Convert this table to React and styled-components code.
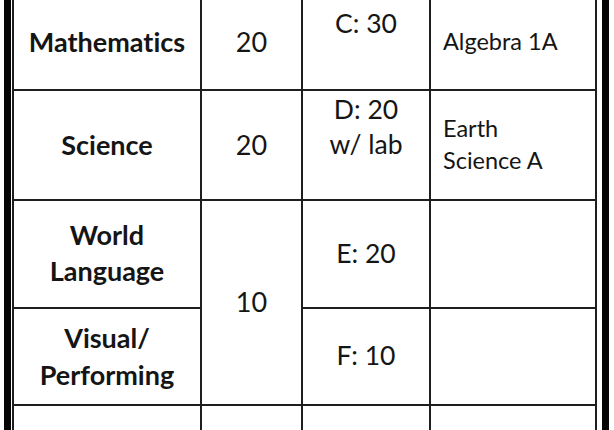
import React from "react";
import styled, { createGlobalStyle } from "styled-components";

const GlobalStyle = createGlobalStyle`
  html, body {
    margin: 0;
    padding: 0;
    background: #fff;
  }
  body {
    font-family: Lato, "Open Sans", "Liberation Sans", sans-serif;
    font-variant-ligatures: none;
    color: #151515;
  }
`;

const Page = styled.div`
  width: 614px;
  height: 430px;
  overflow: hidden;
  background: #fff;
`;

const Frame = styled.div`
  display: inline-block;
  margin: -7px 0 0 4px;
  padding: 0 5px 0 1px;
  border-left: 7px solid #050505;
  border-right: 7px solid #050505;
`;

const Grid = styled.div`
  display: grid;
  grid-template-columns: 186px 99px 126px 164px;
  grid-template-rows: 94px 108px 106px 95px 80px;
  gap: 2px;
  padding: 2px;
  background: #1e1e1e;
`;

const Cell = styled.div`
  background: #fff;
  display: flex;
  flex-direction: column;
  justify-content: center;
  align-items: ${(p) => (p.$left ? "flex-start" : "center")};
  padding: ${(p) => (p.$left ? "0 8px 2px 12px" : "0 4px 2px")};
  grid-row: ${(p) => (p.$span ? `span ${p.$span}` : "auto")};
  font-size: ${(p) => p.$size || 27}px;
  font-weight: ${(p) => (p.$bold ? 700 : 400)};
  line-height: ${(p) => p.$lh || 35}px;
  text-align: ${(p) => (p.$left ? "left" : "center")};
  font-variant-ligatures: none;
`;

const Line = styled.span`
  display: block;
  min-height: ${(p) => p.$lh || 35}px;
  white-space: nowrap;
`;

const Lines = ({ lines, lh }) =>
  lines.map((t, i) => (
    <Line key={i} $lh={lh}>
      {t || "\u00a0"}
    </Line>
  ));

export default function App() {
  return (
    <Page>
      <GlobalStyle />
      <Frame>
        <Grid>
          <Cell $bold>Mathematics</Cell>
          <Cell>20</Cell>
          <Cell $size={26.5}>
            <Lines lines={["C: 30", ""]} />
          </Cell>
          <Cell $left $size={23.5} $lh={32}>
            <Lines lines={["Algebra 1A"]} lh={32} />
          </Cell>

          <Cell $bold>Science</Cell>
          <Cell>20</Cell>
          <Cell $size={26.5}>
            <Lines lines={["D: 20", "w/ lab", ""]} />
          </Cell>
          <Cell $left $size={23.5} $lh={32}>
            <Lines lines={["Earth", "Science A"]} lh={32} />
          </Cell>

          <Cell $bold $lh={36}>
            <Lines lines={["World", "Language"]} lh={36} />
          </Cell>
          <Cell $span={2}>10</Cell>
          <Cell $size={26.5}>E: 20</Cell>
          <Cell $left />

          <Cell $bold $lh={37}>
            <Lines lines={["Visual/", "Performing"]} lh={37} />
          </Cell>
          <Cell $size={26.5}>F: 10</Cell>
          <Cell $left />

          <Cell />
          <Cell />
          <Cell />
          <Cell $left />
        </Grid>
      </Frame>
    </Page>
  );
}
